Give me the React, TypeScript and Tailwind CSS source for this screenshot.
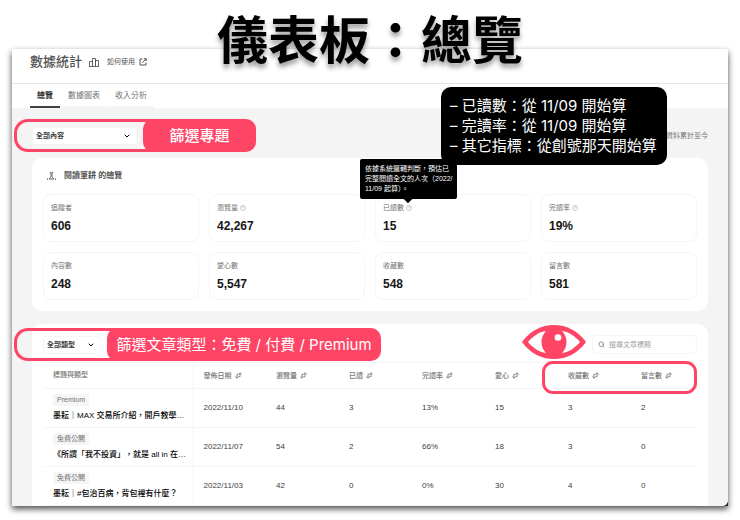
import { useState } from 'react';
import { ChevronDown, Search } from 'lucide-react';

const tabs = ['總覽', '數據圖表', '收入分析'];

const stats = [
  { label: '追蹤者', value: '606' },
  { label: '瀏覽量', value: '42,267', help: true },
  { label: '已讀數', value: '15', help: true, tip: true },
  { label: '完讀率', value: '19%', help: true },
  { label: '內容數', value: '248' },
  { label: '愛心數', value: '5,547' },
  { label: '收藏數', value: '548' },
  { label: '留言數', value: '581' },
];

const columns = ['發佈日期', '瀏覽量', '已讀', '完讀率', '愛心', '收藏數', '留言數'];

const posts = [
  { tag: 'Premium', title: '墨耘｜MAX 交易所介紹，開戶教學…', cells: ['2022/11/10', '44', '3', '13%', '15', '3', '2'] },
  { tag: '免費公開', title: '《所謂「我不投資」，就是 all in 在…', cells: ['2022/11/07', '54', '2', '66%', '18', '3', '0'] },
  { tag: '免費公開', title: '墨耘｜#包治百病，背包裡有什麼？', cells: ['2022/11/03', '42', '0', '0%', '30', '4', '0'] },
];

function ChartIcon() {
  return (
    <svg viewBox="0 0 20 18" className="w-[10px] h-[9px] text-neutral-600" fill="none" stroke="currentColor" strokeWidth="1.8" strokeLinejoin="round">
      <path d="M1 17V7h6v10M7 17V1h6v16M13 17V5h6v12M0 17h20" />
    </svg>
  );
}

function OpenIcon() {
  return (
    <svg viewBox="0 0 16 16" className="w-2 h-2" fill="none" stroke="currentColor" strokeWidth="2">
      <path d="M7 2H2v12h12V9M10 1.500h4.500V6M14 2L6.500 9.500" />
    </svg>
  );
}

function ReaderIcon() {
  return (
    <svg viewBox="0 0 18 16" className="w-[9px] h-2 text-neutral-600" fill="none" stroke="currentColor" strokeWidth="1.8">
      <path d="M5.500 1.200H8V7c0 3-1.500 5-4 7M12.500 1.200H10V7c0 3 1.500 5 4 7M4 14h10" />
      <path d="M0 14h2M16 14h2" strokeWidth="2.500" />
    </svg>
  );
}

function SortIcon() {
  return (
    <svg viewBox="0 0 14 14" className="w-[7px] h-[7px]" fill="none" stroke="currentColor" strokeWidth="1.7">
      <path d="M6.500 4.500H4v7.500M1 9l3 3.500L7 9M7.500 9.500H10V2M7 5l3-3.500L13 5" />
    </svg>
  );
}

function HelpIcon() {
  return (
    <svg viewBox="0 0 12 12" className="w-[6px] h-[6px] text-neutral-400" fill="none" stroke="currentColor">
      <circle cx="6" cy="6" r="5.200" />
      <path d="M4.300 4.800c0-2.200 3.400-2.200 3.400 0 0 1.200-1.700 1.200-1.700 2.400M6 8.200v1" />
    </svg>
  );
}

function EyeIcon() {
  return (
    <svg viewBox="0 0 64 34" className="absolute right-[122px] top-px z-10 w-16 h-[34px]">
      <path d="M0 17C8 6 19 0 32 0s24 6 32 17C56 28 45 34 32 34S8 28 0 17z" fill="#ff4565" />
      <path d="M6 17c5-6 11-10 18-11-6 6-6 16 0 22-7-1-13-5-18-11zM58 17c-5-6-11-10-18-11 6 6 6 16 0 22 7-1 13-5 18-11z" fill="#fff" />
      <circle cx="36" cy="12.500" r="3.300" fill="#fff" />
    </svg>
  );
}

function Filter({ id, label, option, className }: { id: string; label: string; option: string; className: string }) {
  return (
    <div className={`relative ${className}`}>
      <select id={id} aria-label={label} className="block appearance-none w-full h-[18px] pl-[3px] rounded-xs border border-neutral-100 bg-white text-[7px] leading-4 font-bold text-neutral-700">
        <option>{option}</option>
      </select>
      <ChevronDown size={8} strokeWidth={3} className="absolute right-[6px] top-[5px] pointer-events-none" />
    </div>
  );
}

export default function App() {
  const [active, setActive] = useState(0);

  return (
    <div lang="zh-Hant" className="relative flex flex-col h-screen overflow-hidden bg-white px-3 pt-[49px] pb-[14px] font-['Liberation_Sans','Noto_Sans_CJK_TC',sans-serif]">
      <h1 className="absolute inset-x-0 top-[10px] z-30 text-center text-[51px] leading-[64px] font-bold text-black [text-shadow:0_4px_5px_rgba(0,0,0,0.4)]">儀表板：總覽</h1>

      <div className="flex-1 min-h-0 bg-[#3d2018] rounded-tr-xs shadow-[0_3px_6px_rgba(0,0,0,0.7)]">
        <div className="h-full flex flex-col overflow-hidden rounded-br-[6px] bg-white">
          <header className="flex items-center shrink-0 h-[35px] pl-[18px] pb-2 border-b border-neutral-200">
            <h2 className="text-[13px] leading-4 font-medium text-neutral-600 mr-[7px]">數據統計</h2>
            <ChartIcon />
            <a href="#help" className="flex items-center gap-1 ml-2 text-[7px] leading-3 text-neutral-600">
              如何使用
              <OpenIcon />
            </a>
          </header>

          <nav className="flex shrink-0 gap-px h-6 pl-[18px]">
            {tabs.map((tab, i) => (
              <button
                key={tab}
                onClick={() => setActive(i)}
                className={`px-[7px] pt-[2px] border-b-2 text-[8px] leading-3 ${active === i ? 'border-neutral-700 font-bold text-neutral-800' : 'border-neutral-100 text-neutral-500'}`}
              >
                {tab}
              </button>
            ))}
          </nav>

          <main className="flex-1 min-h-0 bg-[#f4f4f4] px-5 pt-[19px]">
            <div className="relative z-20 flex items-center justify-between h-[18px]">
              <Filter id="topic" label="篩選專題" option="全部內容" className="w-[105px]" />
              <p className="text-[7px] leading-3 text-neutral-500">資料累計至今</p>
              <div className="absolute -left-[18px] -top-2 flex h-[33px] pointer-events-none">
                <div className="w-[140px] rounded-l-[14px] border-3 border-r-0 border-[#ff4565]" />
                <p className="-ml-[11px] w-[113px] rounded-[10px] bg-[#ff4565] text-center font-['Inter','Noto_Sans_CJK_TC',sans-serif] text-[15px] leading-[33px] font-medium text-white">篩選專題</p>
              </div>
              <ul className="absolute right-[41px] -top-10 h-[78px] w-[226px] pl-[9px] py-[9px] rounded-[10px] bg-black font-['Inter','Noto_Sans_CJK_TC',sans-serif] text-[15px] leading-5 text-white whitespace-nowrap">
                <li>– 已讀數：從 11/09 開始算</li>
                <li>– 完讀率：從 11/09 開始算</li>
                <li>– 其它指標：從創號那天開始算</li>
              </ul>
            </div>

            <section className="mt-[13px] px-[11px] pb-[11px] rounded-[10px] bg-white">
              <h3 className="flex items-center gap-2 h-9 pl-1 text-[8px] font-bold text-neutral-600">
                <ReaderIcon />
                閱讀筆耕 的總覽
              </h3>
              <dl className="grid grid-cols-4 gap-[10px]">
                {stats.map((s) => (
                  <div key={s.label} className="relative h-12 pl-[7px] pt-[7px] rounded-lg border border-neutral-100">
                    <dt className="flex items-center gap-[2px] text-[7px] leading-3 text-neutral-500">
                      {s.label}
                      {s.help && <HelpIcon />}
                    </dt>
                    <dd className="mt-1 text-[12px] leading-4 font-bold text-neutral-900">{s.value}</dd>
                    {s.tip && (
                      <div role="tooltip" className="absolute z-10 -left-4 -top-9 w-[97px] h-10 px-[5px] py-[5px] rounded-xs bg-black text-[7px] leading-[10px] text-white whitespace-nowrap">
                        依據系統邏輯判斷，預估已<br />完整閱讀全文的人次（2022/<br />11/09 起算）。
                        <span className="absolute left-[45px] -bottom-[3px] size-[6px] rotate-45 bg-black" />
                      </div>
                    )}
                  </div>
                ))}
              </dl>
            </section>

            <section className="relative mt-[13px] px-[11px] pt-[11px] rounded-t-[10px] bg-white">
              <div className="flex items-center justify-between h-[19px]">
                <Filter id="type" label="篩選文章類型" option="全部類型" className="w-[58px]" />
                <div className="relative w-[105px]">
                  <Search size={7} strokeWidth={2.5} className="absolute left-[6px] top-[6px] text-neutral-500" />
                  <input type="text" aria-label="搜尋文章標題" placeholder="搜尋文章標題" className="block w-full h-[19px] pl-4 rounded-sm border border-neutral-100 text-[7px] placeholder:text-neutral-400" />
                </div>
              </div>

              <div className="absolute -left-[18px] top-1 z-10 flex h-[33px] pointer-events-none">
                <div className="w-[104px] rounded-l-[14px] border-3 border-r-0 border-[#ff4565]" />
                <p className="-ml-[11px] w-[274px] rounded-[10px] bg-[#ff4565] text-center font-['Inter','Noto_Sans_CJK_TC',sans-serif] text-[15px] leading-[33px] text-white whitespace-nowrap">篩選文章類型：免費 / 付費 / Premium</p>
              </div>
              <EyeIcon />
              <div className="absolute right-[11px] top-[37px] z-10 w-[155px] h-[33px] rounded-[11px] border-3 border-[#ff4565] pointer-events-none" />

              <table className="w-full mt-2 table-fixed border-collapse text-left text-[8px] text-neutral-700">
                <thead>
                  <tr className="h-[26px] border-y border-neutral-100 text-[7px] text-neutral-500">
                    <th scope="col" className="w-[150px] pl-[10px] border-r border-neutral-100 font-medium">標題與類型</th>
                    {columns.map((c) => (
                      <th key={c} scope="col" className="pl-[10px] font-medium not-last:w-[73px]">
                        <button className="flex items-center gap-[3px] leading-3">
                          {c}
                          <SortIcon />
                        </button>
                      </th>
                    ))}
                  </tr>
                </thead>
                <tbody>
                  {posts.map((p) => (
                    <tr key={p.title} className="h-[39px] border-b border-neutral-100">
                      <td className="pl-[10px] border-r border-neutral-100 whitespace-nowrap">
                        <span className="block w-fit px-1 rounded-xs bg-neutral-100 text-[7px] leading-3 text-neutral-500">{p.tag}</span>
                        <a href="#post" className="block mt-1 leading-3 font-medium text-black">{p.title}</a>
                      </td>
                      {p.cells.map((cell, i) => (
                        <td key={i} className="pl-[10px]">{cell}</td>
                      ))}
                    </tr>
                  ))}
                </tbody>
              </table>
            </section>
          </main>
        </div>
      </div>
    </div>
  );
}
